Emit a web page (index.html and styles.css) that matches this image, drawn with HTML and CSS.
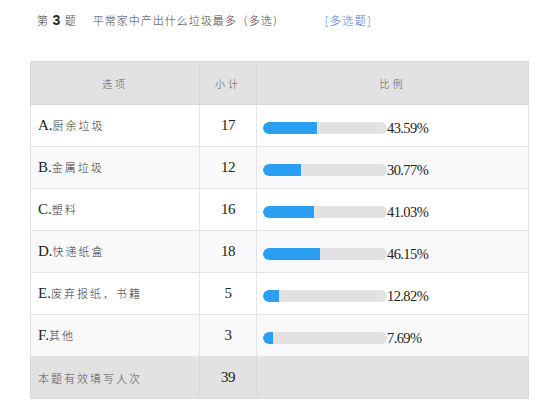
FILE: index.html
```html
<!DOCTYPE html>
<html lang="zh">
<head>
<meta charset="utf-8">
<link rel="stylesheet" href="styles.css">
</head>
<body>
<div class="page">
  <div class="title">
    <span class="qno">第 <b>3</b> 题</span>
    <span class="qtext">平常家中产出什么垃圾最多（多选）</span>
    <span class="qtype">[多选题]</span>
  </div>
  <table class="stats">
    <colgroup><col class="c1"><col class="c2"><col class="c3"></colgroup>
    <thead>
      <tr><th>选项</th><th>小计</th><th>比例</th></tr>
    </thead>
    <tbody>
      <tr><td class="opt"><span class="l">A.</span>厨余垃圾</td><td class="num">17</td><td class="pct"><span class="bar"><span class="fill" style="width:43.59%"></span></span><span class="pv">43.59%</span></td></tr>
      <tr class="alt"><td class="opt"><span class="l">B.</span>金属垃圾</td><td class="num">12</td><td class="pct"><span class="bar"><span class="fill" style="width:30.77%"></span></span><span class="pv">30.77%</span></td></tr>
      <tr><td class="opt"><span class="l">C.</span>塑料</td><td class="num">16</td><td class="pct"><span class="bar"><span class="fill" style="width:41.03%"></span></span><span class="pv">41.03%</span></td></tr>
      <tr class="alt"><td class="opt"><span class="l">D.</span>快递纸盒</td><td class="num">18</td><td class="pct"><span class="bar"><span class="fill" style="width:46.15%"></span></span><span class="pv">46.15%</span></td></tr>
      <tr><td class="opt"><span class="l">E.</span>废弃报纸，书籍</td><td class="num">5</td><td class="pct"><span class="bar"><span class="fill" style="width:12.82%"></span></span><span class="pv">12.82%</span></td></tr>
      <tr class="alt"><td class="opt"><span class="l">F.</span>其他</td><td class="num">3</td><td class="pct"><span class="bar"><span class="fill" style="width:7.69%"></span></span><span class="pv">7.69%</span></td></tr>
    </tbody>
    <tfoot>
      <tr><td class="opt foot">本题有效填写人次</td><td class="num">39</td><td></td></tr>
    </tfoot>
  </table>
</div>
</body>
</html>
```
FILE: styles.css
```css
html, body {
  margin: 0;
  padding: 0;
  background: #ffffff;
}
body {
  font-family: "Noto Sans CJK SC", "Liberation Serif", serif;
  color: #444;
}
.page {
  padding: 11px 0 0 30px;
}
.title {
  display: flex;
  align-items: center;
  height: 18px;
  font-size: 11px;
  font-weight: 300;
  color: #444;
  padding-left: 7px;
}
.qno {
  letter-spacing: 1px;
}
.qno b {
  font-family: "Liberation Sans", sans-serif;
  font-size: 14px;
  font-weight: bold;
  color: #222;
}
.qtext {
  margin-left: 16px;
  letter-spacing: 1px;
}
.qtype {
  margin-left: 40px;
  color: #3b7dd1;
  letter-spacing: 1.5px;
}
.stats {
  margin-top: 32px;
  border-collapse: collapse;
  width: 498px;
  table-layout: fixed;
}
.c1 { width: 169px; }
.c2 { width: 57px; }
.c3 { width: 272px; }
.stats th, .stats td {
  border: 1px solid #e4e4e8;
  padding: 0;
}
.stats thead th {
  height: 42px;
  background: #e2e1e4;
  font-size: 10px;
  font-weight: 300;
  color: #555;
  letter-spacing: 3px;
  text-align: center;
  border-color: #d9d8dc;
}
.stats tbody td {
  height: 41px;
  background: #ffffff;
}
.stats tbody tr.alt td {
  background: #f9f9fb;
}
.opt {
  padding-left: 7px !important;
  font-size: 11px;
  font-weight: 300;
  color: #333;
  letter-spacing: 2px;
}
.l {
  font-family: "Liberation Serif", serif;
  font-size: 15px;
  font-weight: normal;
  color: #222;
  letter-spacing: 0;
}
.num {
  text-align: center;
  font-family: "Liberation Serif", serif;
  font-size: 15px;
  color: #222;
  letter-spacing: -0.5px;
}
.pct {
  padding-left: 6px !important;
}
.pct, .pct * {
  vertical-align: middle;
}
.bar {
  display: inline-block;
  width: 124px;
  height: 12px;
  border-radius: 6px;
  background: #e2e2e2;
  overflow: hidden;
}
.fill {
  display: block;
  height: 100%;
  background: #2a9ef0;
  border-radius: 6px 0 0 6px;
}
.pv {
  font-family: "Liberation Serif", serif;
  font-size: 14.5px;
  color: #222;
  letter-spacing: -0.6px;
}
.stats tfoot td {
  height: 41px;
  background: #e2e1e4;
  border-color: #d9d8dc;
}
.foot {
  color: #555;
}
```
